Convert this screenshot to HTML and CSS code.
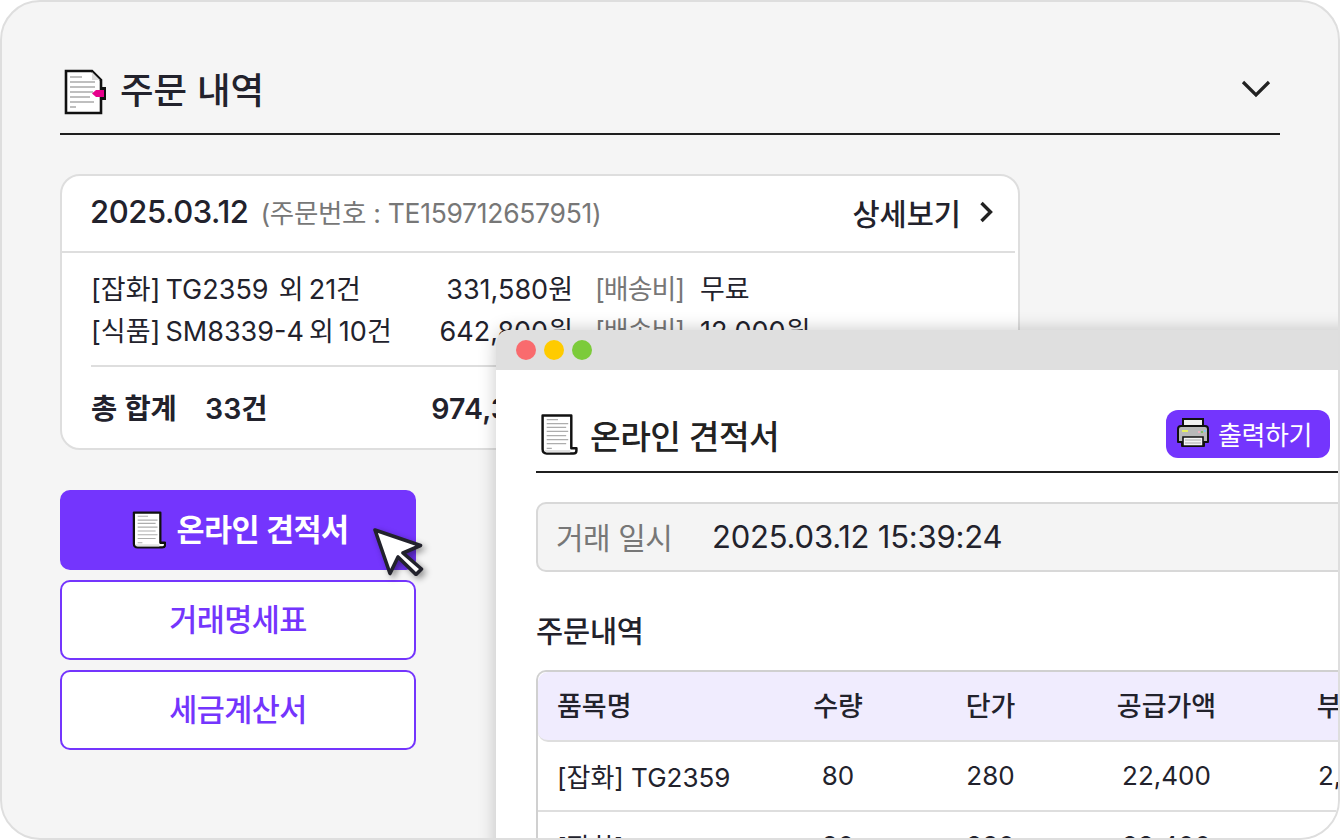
FILE: index.html
```html
<!DOCTYPE html>
<html lang="ko">
<head>
<meta charset="utf-8">
<title>주문 내역</title>
<link rel="stylesheet" href="styles.css">
</head>
<body>
<svg class="defs" width="0" height="0" aria-hidden="true">
  <symbol id="scroll" viewBox="0 0 36 40">
    <path d="M2 1.5H30V33.5H35V35.5Q35 38.5 32 38.5H6Q2 38.5 2 34.5Z" fill="#fff" stroke="#111" stroke-width="2.4" stroke-linejoin="round"/>
    <path d="M4 35H29V37.5H6Q4 37.5 4 35Z" fill="#e2e2e2"/>
    <path d="M6 5.5H17M6 9.5H27M6 13H25M6 17H27M6 21H25M6 25H27M6 29H25M6 33.5H11" stroke="#adadad" stroke-width="1.2" fill="none"/>
  </symbol>
</svg>
<main class="panel">
  <header class="panel-head">
    <h1 class="panel-title">
      <svg class="doc-icon" viewBox="0 0 42 46" aria-hidden="true">
        <path d="M36 18H42V31H36Z" fill="#111"/>
        <path d="M2 2H28L37 11V44H2Z" fill="#fff" stroke="#111" stroke-width="2.6"/>
        <path d="M28 3V11H36Z" fill="#ddd"/>
        <path d="M6 8H18M6 13H31M6 18H31M6 23H29M6 28H26M6 33H30M6 38H12" stroke="#aaa" stroke-width="1.4" fill="none"/>
        <path d="M28 24.500L32 21H40V28H32Z" fill="#e6008c"/>
      </svg>
      <span class="panel-title-text">주문 내역</span>
    </h1>
    <svg class="chevron-down" viewBox="0 0 32 20" aria-hidden="true"><path d="M3 3L16 16L29 3" fill="none" stroke="#222" stroke-width="3.2"/></svg>
  </header>

  <section class="order-card">
    <div class="card-top">
      <p class="order-date">2025.03.12 <span class="order-no">(주문번호 : TE159712657951)</span></p>
      <a class="detail-link">상세보기
        <svg class="chevron-right" viewBox="0 0 16 24" aria-hidden="true"><path d="M2.500 3L11.500 12L2.500 21" fill="none" stroke="#222" stroke-width="3.400"/></svg>
      </a>
    </div>
    <div class="card-body">
      <div class="line-row">
        <span class="item">[잡화] TG2359&nbsp; 외 21건</span><span class="amount">331,580원</span><span class="ship-label">[배송비]</span><span class="ship-value">무료</span>
      </div>
      <div class="line-row">
        <span class="item">[식품] SM8339-4 외 10건</span><span class="amount">642,800원</span><span class="ship-label">[배송비]</span><span class="ship-value">12,000원</span>
      </div>
      <div class="total-row">
        <span class="total-label">총 합계</span><span class="total-count">33건</span><span class="total-amount">974,380원</span>
      </div>
    </div>
  </section>

  <div class="doc-buttons">
    <button class="doc-btn primary">
      <svg class="scroll-sm" aria-hidden="true"><use href="#scroll"/></svg>
      <span>온라인 견적서</span>
    </button>
    <button class="doc-btn"><span>거래명세표</span></button>
    <button class="doc-btn"><span>세금계산서</span></button>
  </div>

  <svg class="cursor" viewBox="0 0 54 52" aria-hidden="true">
    <path d="M5 6L50.500 21.500L33 29L51.500 45L46 50.500L28 33L20 49.500Z" fill="#fff" stroke="#22222c" stroke-width="3.600" stroke-linejoin="round"/>
  </svg>

  <section class="quote-window">
    <div class="titlebar">
      <span class="dot red"></span><span class="dot yellow"></span><span class="dot green"></span>
    </div>
    <div class="quote-body">
      <header class="quote-head">
        <h2 class="quote-title">
          <svg class="scroll-lg" aria-hidden="true"><use href="#scroll"/></svg>
          온라인 견적서
        </h2>
        <button class="print-btn">
          <svg class="printer" viewBox="0 0 32 32" aria-hidden="true">
            <path d="M6 2H26V12H6Z" fill="#f2f2f2" stroke="#111" stroke-width="2"/>
            <path d="M4 9H28Q31 9 31 12V25H27V29H5V25H1V12Q1 9 4 9Z" fill="#b9b9b9" stroke="#111" stroke-width="2" stroke-linejoin="round"/>
            <path d="M5 13H11V15H5Z" fill="#e8f060"/>
            <path d="M21 14H23V16H21Z" fill="#f0b0c0"/><path d="M24 14H26V16H24Z" fill="#7cc060"/><path d="M27 13H29V15H27Z" fill="#80c8f0"/>
            <path d="M6 20H26V29H6Z" fill="#f4f4f4" stroke="#111" stroke-width="1.600"/>
            <path d="M8 23H24M8 26H24" stroke="#aaa" stroke-width="1.200"/>
          </svg>
          출력하기
        </button>
      </header>
      <div class="trade-box"><span class="trade-label">거래 일시</span><span class="trade-value">2025.03.12 15:39:24</span></div>
      <h3 class="section-title">주문내역</h3>
      <div class="table">
        <div class="t-row t-head"><span class="c1">품목명</span><span class="c2">수량</span><span class="c3">단가</span><span class="c4">공급가액</span><span class="c5">부가세</span></div>
        <div class="t-row"><span class="c1">[잡화] TG2359</span><span class="c2">80</span><span class="c3">280</span><span class="c4">22,400</span><span class="c5">2,240</span></div>
        <div class="t-row"><span class="c1">[잡화] TG2359</span><span class="c2">80</span><span class="c3">280</span><span class="c4">22,400</span><span class="c5">2,240</span></div>
      </div>
    </div>
  </section>
</main>
</body>
</html>
```

FILE: styles.css
```css
* { box-sizing: border-box; }
html, body { margin: 0; width: 1340px; height: 840px; overflow: hidden; }
body { font-family: Inter, "Noto Sans CJK KR", sans-serif; color: #22222c; background: #fff; }
.defs { position: absolute; }
h1, h2, h3, p { margin: 0; }

.panel {
  position: relative;
  width: 1340px;
  height: 840px;
  padding: 48px 58px 0;
  background: #f5f5f5;
  border: 2px solid #dedede;
  border-radius: 40px;
  overflow: hidden;
}

.panel-head {
  display: flex;
  align-items: center;
  justify-content: space-between;
  height: 85px;
  padding: 0 8px 0 4px;
  border-bottom: 2px solid #1f1f1f;
}
.panel-title { display: flex; align-items: center; gap: 14px; font-size: 36.5px; font-weight: 500; }
.panel-title-text { position: relative; top: -3px; }
.doc-icon { width: 42px; height: 46px; }
.chevron-down { width: 32px; height: 20px; margin-bottom: 6px; }

.order-card {
  width: 960px;
  height: 276px;
  margin-top: 39px;
  background: #fff;
  border: 2px solid #dedede;
  border-radius: 20px;
  overflow: hidden;
}
.card-top {
  display: flex;
  align-items: center;
  justify-content: space-between;
  width: 953px;
  height: 77px;
  padding: 0 20px 4px 28px;
  border-bottom: 2px solid #dedede;
}
.order-date { font-size: 31px; font-weight: 500; letter-spacing: -0.4px; }
.order-no { margin-left: 4px; font-size: 26.5px; font-weight: 400; color: #777; letter-spacing: -0.3px; }
.detail-link { display: flex; align-items: center; gap: 18px; font-size: 29.5px; font-weight: 500; }
.chevron-right { width: 16px; height: 24px; }

.card-body { padding: 13px 29px 0; font-size: 27px; }
.line-row { display: flex; align-items: center; height: 42px; }
.item { width: 310px; white-space: nowrap; word-spacing: -2.5px; }
.amount { width: 172px; text-align: right; white-space: nowrap; }
.ship-label { width: 105px; margin-left: 22px; color: #777; white-space: nowrap; letter-spacing: -1px; }
.ship-value { white-space: nowrap; }
.total-row {
  display: flex;
  align-items: center;
  height: 80px;
  margin-top: 15px;
  border-top: 2px solid #dedede;
  font-weight: 600;
  font-size: 28.5px;
}
.total-label { width: 114px; }
.total-count { width: 150px; }
.total-amount { width: 218px; text-align: right; white-space: nowrap; letter-spacing: 0.2px; }

.doc-buttons { display: flex; flex-direction: column; gap: 10px; width: 356px; margin-top: 40px; }
.doc-btn {
  display: flex;
  align-items: center;
  justify-content: center;
  gap: 11px;
  height: 80px;
  padding: 0;
  background: #fff;
  border: 2px solid #7435fd;
  border-radius: 10px;
  font: 500 30.5px Inter, "Noto Sans CJK KR", sans-serif;
  letter-spacing: -0.6px;
  color: #7435fd;
}
.doc-btn span { position: relative; top: -2px; }
.doc-btn.primary { padding-left: 4px; background: #7435fd; color: #fff; font-weight: 600; }
.scroll-sm { width: 34px; height: 38px; }

.cursor {
  position: absolute;
  left: 368px;
  top: 522px;
  width: 54px;
  height: 52px;
  filter: drop-shadow(3px 3px 3px rgba(0,0,0,.4));
}

.quote-window {
  position: absolute;
  left: 494px;
  top: 328px;
  width: 900px;
  height: 640px;
  background: #fff;
  border-radius: 14px 14px 0 0;
  box-shadow: 0 0 18px rgba(0,0,0,.22);
  overflow: hidden;
}
.titlebar { display: flex; align-items: center; gap: 8px; height: 40px; padding-left: 20px; background: #dfdfdf; }
.dot { width: 20px; height: 20px; border-radius: 50%; }
.red { background: #f96b6e; }
.yellow { background: #ffcb00; }
.green { background: #7ccb3a; }

.quote-body { padding: 40px 0 0 40px; }
.quote-head {
  display: flex;
  align-items: center;
  justify-content: space-between;
  height: 63px;
  padding: 0 66px 13px 4px;
  border-bottom: 2px solid #1f1f1f;
}
.quote-title { display: flex; align-items: center; gap: 12px; font-size: 33.3px; font-weight: 500; letter-spacing: -0.5px; color: #222; }
.scroll-lg { width: 38px; height: 41px; }
.print-btn {
  display: flex;
  align-items: center;
  gap: 9px;
  width: 164px;
  height: 48px;
  padding: 0 0 2px 11px;
  background: #7435fd;
  border: 0;
  border-radius: 12px;
  font: 400 26px Inter, "Noto Sans CJK KR", sans-serif;
  letter-spacing: -0.4px;
  color: #fff;
}
.printer { width: 32px; height: 32px; }

.trade-box {
  display: flex;
  align-items: center;
  height: 70px;
  margin-top: 29px;
  padding: 0 0 2px 18px;
  background: #f4f4f4;
  border: 2px solid #d8d8d8;
  border-radius: 10px;
}
.trade-label { width: 156px; font-size: 30px; color: #777; letter-spacing: -0.5px; }
.trade-value { font-size: 31px; letter-spacing: -0.2px; }

.section-title { margin-top: 37px; font-size: 29.5px; font-weight: 500; line-height: 44px; letter-spacing: -0.2px; }

.table { margin-top: 17px; border: 2px solid #d0d0d0; border-right: 0; border-bottom: 0; border-radius: 10px 0 0 0; font-size: 26px; }
.t-row { display: grid; grid-template-columns: 211px 140px 165px 187px 188px; align-items: center; height: 70px; border-bottom: 2px solid #dedede; padding: 0 0 2px 19px; }
.t-row span { text-align: center; white-space: nowrap; }
.t-row .c1 { text-align: left; }
.t-head { background: #f0ecfe; font-size: 27px; font-weight: 500; border-radius: 10px 0 0 10px; padding-bottom: 4px; }
```
